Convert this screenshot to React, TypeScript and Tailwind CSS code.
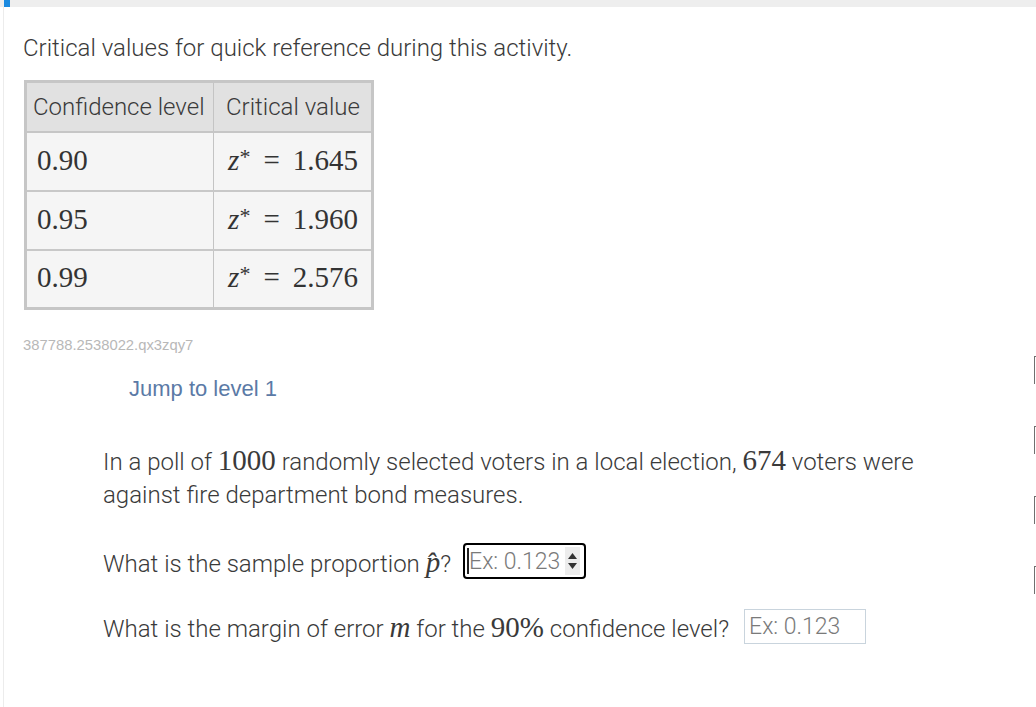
import React from "react";

const roboto = { fontFamily: "Roboto, 'Noto Sans', sans-serif" };
const serif = { fontFamily: "'Liberation Serif', 'DejaVu Serif', serif" };

function Math({ children, className = "" }: { children: React.ReactNode; className?: string }) {
  return (
    <span className={"leading-none " + className} style={serif}>
      {children}
    </span>
  );
}

function Spinner() {
  return (
    <div className="w-[15px] h-[28px] bg-[#ededed] flex flex-col items-center justify-center gap-[4px]">
      <svg width="9" height="6" viewBox="0 0 9 6"><path d="M4.5 0 L9 6 L0 6 Z" fill="#333" /></svg>
      <svg width="9" height="6" viewBox="0 0 9 6"><path d="M0 0 L9 0 L4.5 6 Z" fill="#333" /></svg>
    </div>
  );
}

export default function App() {
  const rows = [
    ["0.90", "1.645"],
    ["0.95", "1.960"],
    ["0.99", "2.576"],
  ];
  return (
    <div className="w-[1036px] h-[707px] bg-white overflow-hidden flex flex-col" style={roboto}>
      <div className="h-[7px] bg-[#eeeeee] shrink-0 flex">
        <div className="ml-[4px] w-[6px] h-[7px] bg-[#1b8ae0]" />
      </div>
      <div className="flex flex-1 ml-[3px] border-l border-[#ececec]">
        <div className="flex-1 pl-[19px]">
          <p className="mt-[27px] text-[24px] leading-[28px] text-[#3a3a3a] font-light">
            Critical values for quick reference during this activity.
          </p>
          <table className="mt-[18px] ml-[1px] border-[3px] border-[#c6c6c6] border-collapse w-[350px]">
            <thead>
              <tr className="bg-[#e1e1e1] h-[50px]">
                <th className="w-[188px] text-left font-light text-[24px] text-[#3a3a3a] pl-[6px] border-r border-[#c4c4c4] border-b-[2px] border-b-[#c6c6c6]">
                  Confidence level
                </th>
                <th className="text-left font-light text-[24px] text-[#3a3a3a] pl-[12px] border-b-[2px] border-[#c6c6c6]">
                  Critical value
                </th>
              </tr>
            </thead>
            <tbody>
              {rows.map(([c, v], i) => (
                <tr key={c} className={"bg-[#f5f5f5] h-[59px] " + (i < 2 ? "border-b-[2px] border-[#c8c8c8]" : "")}>
                  <td className="pl-[10px] border-r border-[#c4c4c4] text-[#333]">
                    <Math className="text-[29px]">{c}</Math>
                  </td>
                  <td className="pr-[13px] text-right text-[#333] whitespace-nowrap">
                    <Math className="text-[29px]">
                      <i>z</i>
                      <span className="relative -top-[6px] text-[22px]">*</span>
                      <span className="mx-[13px]">=</span>
                      {v}
                    </Math>
                  </td>
                </tr>
              ))}
            </tbody>
          </table>
          <p className="mt-[26px] text-[14.8px] leading-[18px] text-[#b8b8b8]" style={{ fontFamily: "'Liberation Sans', Arial, sans-serif" }}>
            387788.2538022.qx3zqy7
          </p>
          <p className="mt-[22px] ml-[106px] text-[22px] leading-[26px] text-[#5b7aa6]" style={{ fontFamily: "'Liberation Sans', Arial, sans-serif" }}>
            Jump to level 1
          </p>
          <div className="ml-[80px] mt-[44px] w-[830px] text-[24px] leading-[33px] text-[#3a3a3a] font-light">
            <p>
              In a poll of <Math className="text-[29px]">1000</Math> randomly selected voters in a local election, <Math className="text-[29px]">674</Math> voters were against fire department bond measures.
            </p>
            <div className="mt-[34px] flex items-center h-[36px]">
              <span className="whitespace-nowrap">
                What is the sample proportion <Math className="text-[29px]"><b><i>p̂</i></b></Math>?
              </span>
              <div className="ml-[12px] mb-[6px] w-[123px] h-[36px] shrink-0 border-[2px] border-black rounded-[4px] flex items-center pl-[2px] pr-[4px]">
                <div className="w-[2px] h-[26px] bg-[#222]" />
                <span className="flex-1 text-[23px] text-[#7a7a7a] font-light leading-none">Ex: 0.123</span>
                <Spinner />
              </div>
            </div>
            <div className="mt-[30px] flex items-center h-[35px]">
              <span className="whitespace-nowrap">
                What is the margin of error <Math className="text-[29px]"><b><i>m</i></b></Math> for the <Math className="text-[29px]">90%</Math> confidence level?
              </span>
              <div className="ml-[15px] mb-[7px] w-[122px] h-[35px] shrink-0 border border-[#c9d4dd] flex items-center pl-[4px]">
                <span className="text-[23px] text-[#7a7a7a] font-light leading-none">Ex: 0.123</span>
              </div>
            </div>
          </div>
        </div>
        <div className="w-[2px] shrink-0 pt-[349px] flex flex-col gap-[42px]">
          {[0, 1, 2, 3].map((k) => (
            <div key={k} className="h-[28px] w-[2px] border-l border-t border-[#6f6f6f]" />
          ))}
        </div>
      </div>
    </div>
  );
}
